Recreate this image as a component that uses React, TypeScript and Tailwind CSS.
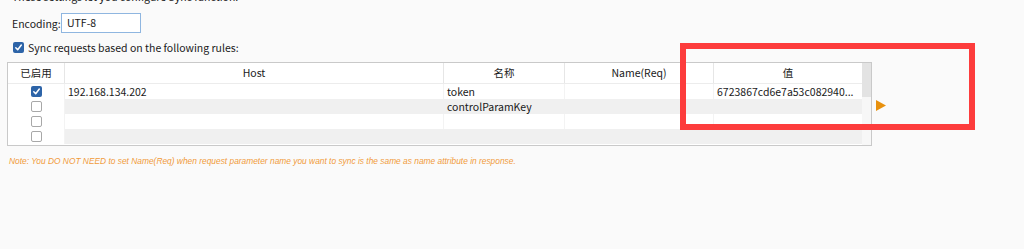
import React from "react";

const ui = "font-['Noto_Sans_CJK_SC',sans-serif]";

function Check({ checked }: { checked?: boolean }) {
  if (checked) {
    return (
      <div className="w-[11px] h-[11px] rounded-[2px] bg-[#2d64a8] flex items-center justify-center">
        <svg width="9" height="9" viewBox="0 0 9 9">
          <path d="M1.8 4.8 L3.7 6.7 L7.3 2" stroke="#fff" strokeWidth="1.5" fill="none" strokeLinecap="round" strokeLinejoin="round" />
        </svg>
      </div>
    );
  }
  return <div className="w-[11px] h-[11px] rounded-[2px] border border-[#a8a8a8] bg-white" />;
}

const rows = [
  { on: true, host: "192.168.134.202", name: "token", req: "", val: "6723867cd6e7a53c082940..." },
  { on: false, host: "", name: "controlParamKey", req: "", val: "" },
  { on: false, host: "", name: "", req: "", val: "" },
  { on: false, host: "", name: "", req: "", val: "" },
];

export default function App() {
  return (
    <div className={`relative w-[1024px] h-[249px] overflow-hidden bg-[#fafafa] text-[#1a1a1a] ${ui}`}>
      <div className="pl-[12px] mt-[-11px] h-[15px] leading-[15px] text-[10.5px] whitespace-nowrap">
        These settings let you configure Sync function.
      </div>
      <div className="flex items-center mt-[9px] h-[20px]">
        <span className="pl-[12px] w-[61px] text-[10.5px] leading-[15px] whitespace-nowrap">Encoding:</span>
        <div className="w-[80px] h-[20px] border border-[#8fb6e0] bg-white pl-[5px] text-[10.5px] leading-[18px]">UTF-8</div>
      </div>
      <div className="flex items-center mt-[8px] h-[12px] pl-[13px] gap-[4px]">
        <Check checked />
        <span className="text-[10.5px] leading-[15px] whitespace-nowrap">Sync requests based on the following rules:</span>
      </div>
      <div className="flex items-start mt-[9px] pl-[7px]">
        <div className="w-[865px] h-[84px] border border-[#c9c9c9] bg-white flex">
          <div className="w-[854px] flex flex-col">
            <div className="grid grid-cols-[57px_379px_121px_149px_148px] h-[21px] border-b border-[#ececec] text-[10.5px] leading-[20px] text-[#1a1a1a]">
              <div className="text-center border-r border-[#e6e6e6]">已启用</div>
              <div className="text-center border-r border-[#e6e6e6]">Host</div>
              <div className="text-center border-r border-[#e6e6e6]">名称</div>
              <div className="text-center border-r border-[#e6e6e6]">Name(Req)</div>
              <div className="text-center">值</div>
            </div>
            {rows.map((r, i) => (
              <div
                key={i}
                className="grid grid-cols-[57px_379px_121px_149px_148px] h-[15px] text-[10.5px] leading-[15px]"
              >
                <div className="flex items-center justify-center bg-white border-r border-[#f3f3f3]">
                  <Check checked={r.on} />
                </div>
                <div className={`pl-[3px] border-r whitespace-nowrap ${i % 2 ? "bg-[#f0f0f0] border-[#f0f0f0]" : "bg-white border-[#f3f3f3]"}`}>{r.host}</div>
                <div className={`pl-[3px] border-r whitespace-nowrap ${i % 2 ? "bg-[#f0f0f0] border-[#f0f0f0]" : "bg-white border-[#f3f3f3]"}`}>{r.name}</div>
                <div className={`pl-[3px] border-r whitespace-nowrap ${i % 2 ? "bg-[#f0f0f0] border-[#f0f0f0]" : "bg-white border-[#f3f3f3]"}`}>{r.req}</div>
                <div className={`pl-[3px] whitespace-nowrap overflow-hidden text-ellipsis ${i % 2 ? "bg-[#f0f0f0]" : "bg-white"}`}>{r.val}</div>
              </div>
            ))}
          </div>
          <div className="w-[9px] flex flex-col bg-[#f7f7f7]">
            <div className="h-[34px] bg-[#e3e3e3]" />
          </div>
        </div>
        <div className="ml-[4px] mt-[38px]">
          <svg width="10" height="11" viewBox="0 0 10 11">
            <polygon points="0,0 10,5.5 0,11" fill="#e8910e" />
          </svg>
        </div>
      </div>
      <div className="pl-[9px] mt-[9px] text-[8.4px] leading-[12px] italic text-[#f19a3a] font-['Liberation_Sans',sans-serif] whitespace-nowrap">
        Note: You DO NOT NEED to set Name(Req) when request parameter name you want to sync is the same as name attribute in response.
      </div>
      <div className="absolute left-[680px] top-[43px] w-[295px] h-[87px] border-[6px] border-[#fd3c3c]" />
    </div>
  );
}
